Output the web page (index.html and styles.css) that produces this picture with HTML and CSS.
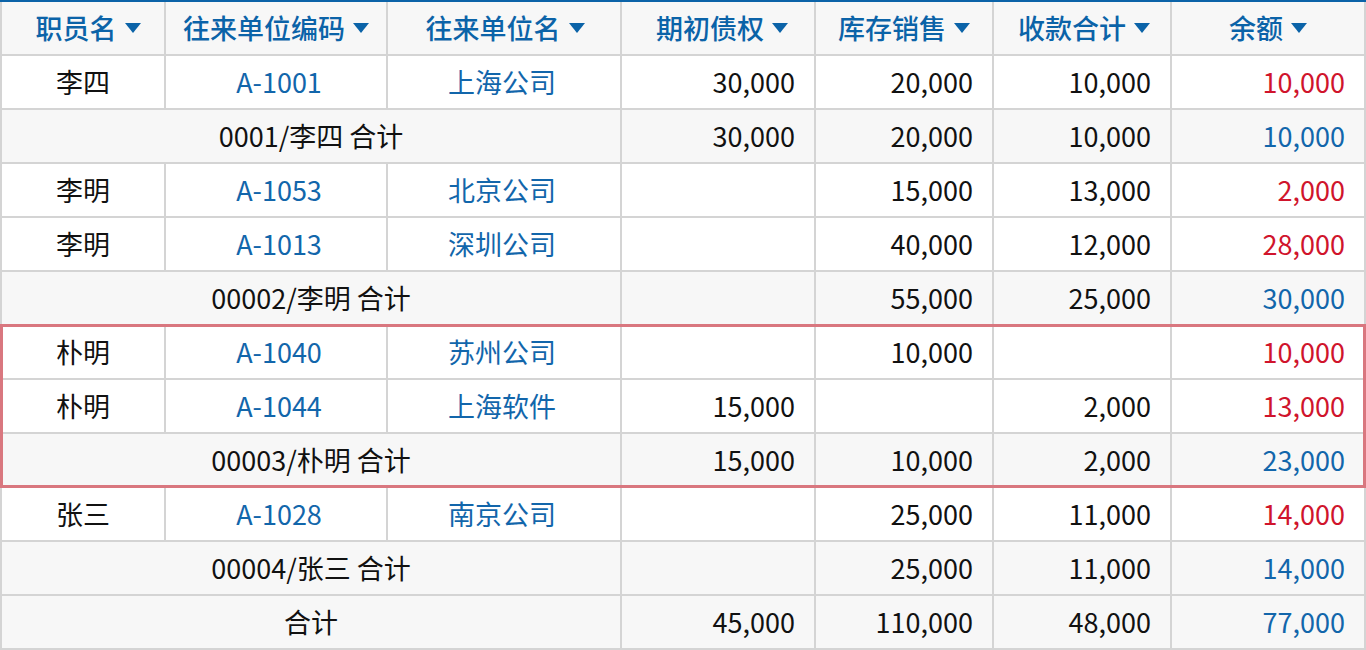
FILE: index.html
```html
<!DOCTYPE html>
<html lang="zh-CN">
<head>
<meta charset="utf-8">
<title>往来报表</title>
<link rel="stylesheet" href="styles.css">
</head>
<body>
<div class="wrap">
  <div class="grid">
    <div class="cell head h-emp">职员名<span class="tri"></span></div>
    <div class="cell head">往来单位编码<span class="tri"></span></div>
    <div class="cell head h-name">往来单位名<span class="tri"></span></div>
    <div class="cell head h-open">期初债权<span class="tri"></span></div>
    <div class="cell head">库存销售<span class="tri"></span></div>
    <div class="cell head h-recv">收款合计<span class="tri"></span></div>
    <div class="cell head">余额<span class="tri"></span></div>

    <div class="cell c">李四</div>
    <div class="cell c link code">A-1001</div>
    <div class="cell c link name">上海公司</div>
    <div class="cell n">30,000</div>
    <div class="cell n">20,000</div>
    <div class="cell n">10,000</div>
    <div class="cell n red">10,000</div>

    <div class="cell c sum span3">0001/李四 合计</div>
    <div class="cell n sum">30,000</div>
    <div class="cell n sum">20,000</div>
    <div class="cell n sum">10,000</div>
    <div class="cell n sum link">10,000</div>

    <div class="cell c">李明</div>
    <div class="cell c link code">A-1053</div>
    <div class="cell c link name">北京公司</div>
    <div class="cell n"></div>
    <div class="cell n">15,000</div>
    <div class="cell n">13,000</div>
    <div class="cell n red">2,000</div>

    <div class="cell c">李明</div>
    <div class="cell c link code">A-1013</div>
    <div class="cell c link name">深圳公司</div>
    <div class="cell n"></div>
    <div class="cell n">40,000</div>
    <div class="cell n">12,000</div>
    <div class="cell n red">28,000</div>

    <div class="cell c sum span3">00002/李明 合计</div>
    <div class="cell n sum"></div>
    <div class="cell n sum">55,000</div>
    <div class="cell n sum">25,000</div>
    <div class="cell n sum link">30,000</div>

    <div class="cell c">朴明</div>
    <div class="cell c link code">A-1040</div>
    <div class="cell c link name">苏州公司</div>
    <div class="cell n"></div>
    <div class="cell n">10,000</div>
    <div class="cell n"></div>
    <div class="cell n red">10,000</div>

    <div class="cell c">朴明</div>
    <div class="cell c link code">A-1044</div>
    <div class="cell c link name">上海软件</div>
    <div class="cell n">15,000</div>
    <div class="cell n"></div>
    <div class="cell n">2,000</div>
    <div class="cell n red">13,000</div>

    <div class="cell c sum span3">00003/朴明 合计</div>
    <div class="cell n sum">15,000</div>
    <div class="cell n sum">10,000</div>
    <div class="cell n sum">2,000</div>
    <div class="cell n sum link">23,000</div>

    <div class="cell c">张三</div>
    <div class="cell c link code">A-1028</div>
    <div class="cell c link name">南京公司</div>
    <div class="cell n"></div>
    <div class="cell n">25,000</div>
    <div class="cell n">11,000</div>
    <div class="cell n red">14,000</div>

    <div class="cell c sum span3">00004/张三 合计</div>
    <div class="cell n sum"></div>
    <div class="cell n sum">25,000</div>
    <div class="cell n sum">11,000</div>
    <div class="cell n sum link">14,000</div>

    <div class="cell c sum span3">合计</div>
    <div class="cell n sum">45,000</div>
    <div class="cell n sum">110,000</div>
    <div class="cell n sum">48,000</div>
    <div class="cell n sum link">77,000</div>
  </div>
  <div class="highlight"></div>
</div>
</body>
</html>
```

FILE: styles.css
```css
html, body {
  margin: 0;
  padding: 0;
  background: #ffffff;
}
body {
  font-family: "Noto Sans CJK SC", "Noto Sans", sans-serif;
  font-size: 27px;
  color: #111111;
}
.wrap {
  position: relative;
  width: 1366px;
  height: 650px;
  overflow: hidden;
}
.grid {
  display: grid;
  grid-template-columns: 162px 220px 232px 192px 176px 176px 192px;
  grid-auto-rows: 52px;
  gap: 2px;
  background: #d4d4d4;
  border-top: 2px solid #0b63a8;
  padding: 0 2px 2px 2px;
  width: 1366px;
  box-sizing: border-box;
}
.cell {
  background: #ffffff;
  display: flex;
  align-items: center;
  line-height: 1;
  white-space: nowrap;
  padding-bottom: 1px;
  box-sizing: border-box;
}
.head {
  background: #f7f7f7;
  color: #0b63a8;
  justify-content: center;
  font-weight: 500;
}
.h-emp {
  padding-left: 10px;
}
.h-name {
  padding-left: 2px;
}
.h-open {
  padding-left: 8px;
}
.h-recv {
  padding-left: 4px;
}
.tri {
  display: inline-block;
  width: 0;
  height: 0;
  margin-left: 8px;
  border-left: 8px solid transparent;
  border-right: 8px solid transparent;
  border-top: 10px solid #0b63a8;
}
.c {
  justify-content: center;
}
.code {
  padding-left: 6px;
}
.name {
  padding-right: 4px;
}
.n {
  justify-content: flex-end;
  padding-right: 19px;
}
.sum {
  background: #f7f7f7;
}
.span3 {
  grid-column: span 3;
}
.link {
  color: #1266ab;
}
.red {
  color: #d0142c;
}
.highlight {
  position: absolute;
  left: 0;
  top: 324px;
  width: 1366px;
  height: 164px;
  box-sizing: border-box;
  border: 3px solid #d9777f;
  pointer-events: none;
}
```
